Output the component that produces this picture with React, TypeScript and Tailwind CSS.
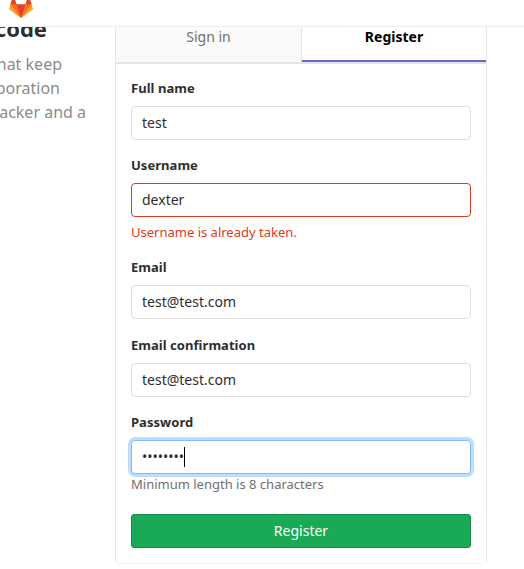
import type { ReactNode } from 'react';

function Logo() {
  return (
    <svg className="-mt-[5px] ml-[9px] block h-6 w-6 shrink-0" viewBox="0 0 36 36" aria-label="GitLab">
      <path fill="#e24329" d="M2 14l9.38 9v-9l-4-12.28c-.205-.632-1.176-.632-1.38 0z" />
      <path fill="#e24329" d="M34 14l-9.38 9v-9l4-12.28c.205-.632 1.176-.632 1.38 0z" />
      <path fill="#e24329" d="M18 34.38L3 14h30z" />
      <path fill="#fc6d26" d="M18 34.38L11.38 14H2l4 11z" />
      <path fill="#fc6d26" d="M18 34.38L24.62 14H34l-4 11z" />
      <path fill="#fca326" d="M2 14L.1 20.16c-.18.565 0 1.2.5 1.56L18 34.38z" />
      <path fill="#fca326" d="M34 14l1.9 6.16c.18.565 0 1.2-.5 1.56L18 34.38z" />
    </svg>
  );
}

type FieldProps = {
  label: string;
  className: string;
  boxClass?: string;
  children: ReactNode;
};

function Field({ label, className, boxClass = 'border-[#dfdfdf]', children }: FieldProps) {
  return (
    <div className={className}>
      <div className="h-5 text-[13px] leading-5 font-bold tracking-[0.04px] text-[#2e2e2e]">{label}</div>
      <div className={`mt-2 flex h-[34px] items-center rounded-[4px] border bg-white px-[10px] text-sm text-[#2e2e2e] ${boxClass}`}>
        {children}
      </div>
    </div>
  );
}

export default function App() {
  return (
    <div className="flex h-[569px] w-[524px] flex-col overflow-hidden bg-white font-['Noto_Sans',sans-serif]">
      <header className="flex h-[27px] shrink-0 items-start border-b border-[#eeeeee]">
        <Logo />
      </header>
      <main className="flex h-[542px] overflow-hidden">
        <section className="w-[115px] shrink-0 whitespace-nowrap">
          <h1 className="-mt-[14px] flex h-[30px] w-[47px] justify-end text-[22px] leading-[30px] font-bold text-[#2e2e2e]">code</h1>
          <div className="mt-[9px] text-base leading-6 text-[#8b8b8b]">
            <p className="flex w-[62px] justify-end">that keep</p>
            <p className="flex w-[60px] justify-end">collaboration</p>
            <p className="flex w-[86px] justify-end">tracker and a</p>
          </div>
        </section>
        <section className="flex h-[537px] w-[372px] shrink-0 flex-col rounded-b-[5px] border border-t-0 border-[#e5e5e5] border-b-[#f0f0f0]">
          <nav className="flex h-[37px] shrink-0 border-b-2 border-[#e5e5e5] text-center text-sm leading-5">
            <div className="w-[186px] border-r border-[#e5e5e5] bg-[#fafafa] text-[#707070]">Sign in</div>
            <div className="flex-1 border-b-2 border-[#6666c4] font-bold text-black">Register</div>
          </nav>
          <form className="px-[15px]">
            <Field label="Full name" className="mt-[14px]">test</Field>
            <Field label="Username" className="mt-[15px]" boxClass="border-[#db3b21]">dexter</Field>
            <p className="mt-[5px] h-5 text-[13px] leading-5 text-[#db3b21]">Username is already taken.</p>
            <Field label="Email" className="mt-[15px]">test@test.com</Field>
            <Field label="Email confirmation" className="mt-4">test@test.com</Field>
            <Field label="Password" className="mt-[15px]" boxClass="border-[#80bdff] shadow-[0_0_0_3px_#bfdeff]">
              <span>••••••••</span>
              <span className="h-5 w-px bg-black" />
            </Field>
            <p className="h-5 text-[13px] leading-5 text-[#707070]">Minimum length is 8 characters</p>
            <button type="button" className="mt-5 block h-[34px] w-full rounded-[3px] border border-[#168f48] bg-[#1aaa55] text-sm text-white">
              Register
            </button>
          </form>
        </section>
      </main>
    </div>
  );
}
